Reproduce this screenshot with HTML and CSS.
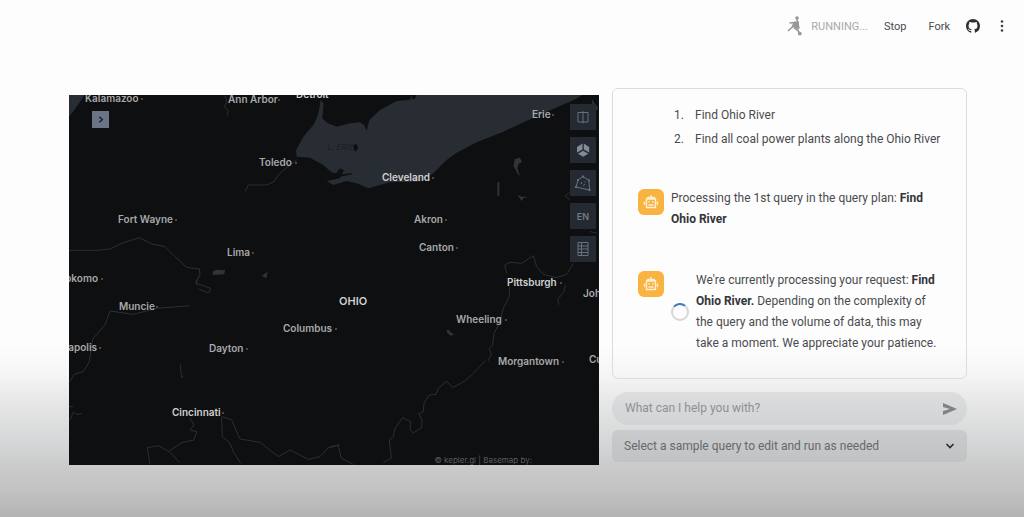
FILE: index.html
```html
<!DOCTYPE html>
<html lang="en">
<head>
<meta charset="utf-8">
<title>Map assistant</title>
<link rel="stylesheet" href="styles.css">
</head>
<body>
<header class="toolbar">
  <div class="status">
    <svg class="runner" viewBox="0 0 16 20" aria-hidden="true">
      <circle cx="10" cy="2" r="1.800"/>
      <path d="M7 5.500 L12 5.500 L12 13.500 L4.500 10.500 Z"/>
      <path class="limb" d="M10.500 6 L10 3 M9 6.500 L2.500 7 M11 8 L12 12.500 M6 10.500 L1 15 M7 11.500 L11 14.500 L13 18"/>
      <circle cx="12.800" cy="17.600" r="1.900"/>
    </svg>
    <span>RUNNING...</span>
  </div>
  <button class="text-button" type="button">Stop</button>
  <button class="text-button" type="button">Fork</button>
  <button class="icon-button" type="button" aria-label="GitHub">
    <svg class="github" viewBox="0 0 16 16" aria-hidden="true"><path d="M8 0C3.580 0 0 3.580 0 8c0 3.540 2.290 6.530 5.470 7.590.4.070.550-.170.550-.380 0-.190-.010-.820-.010-1.490-2.010.370-2.530-.490-2.690-.940-.090-.230-.480-.940-.820-1.130-.280-.150-.680-.520-.010-.530.630-.010 1.080.580 1.230.820.720 1.210 1.870.870 2.330.660.070-.520.280-.870.510-1.070-1.780-.2-3.640-.890-3.640-3.950 0-.870.310-1.590.820-2.150-.080-.2-.360-1.020.080-2.120 0 0 .670-.210 2.200.820.640-.180 1.320-.270 2-.270s1.360.090 2 .270c1.530-1.040 2.200-.820 2.200-.820.440 1.100.160 1.920.080 2.120.510.560.820 1.270.820 2.150 0 3.070-1.870 3.750-3.650 3.950.290.250.540.730.540 1.480 0 1.070-.010 1.930-.010 2.200 0 .210.150.460.550.380A8 8 0 0 0 16 8c0-4.420-3.580-8-8-8z"/></svg>
  </button>
  <button class="icon-button menu-button" type="button" aria-label="Menu">
    <svg class="dots" viewBox="0 0 4 12" aria-hidden="true"><circle cx="2" cy="1.500" r="1.300"/><circle cx="2" cy="6" r="1.300"/><circle cx="2" cy="10.500" r="1.300"/></svg>
  </button>
</header>

<main class="columns">
  <section class="map" aria-label="Map">
    <svg class="basemap" viewBox="0 0 530 370" preserveAspectRatio="xMidYMid slice">
      <!-- north east: Lake Erie and reservoirs -->
      <g transform="translate(221 -10) scale(.33333)">
        <path class="water" d="M92 45 L101 55 97 100 112 114 140 125 180 115 210 112 222 120 230 137 238 105 270 75 320 48 360 44 365 30 880 28 858 42 760 85 640 140 560 172 500 203 470 225 430 265 390 290 300 292 235 310 200 295 170 288 130 300 110 288 150 280 155 268 125 262 100 240 60 218 20 215 18 195 40 155 70 120 78 105 86 80Z"/>
        <path class="land" d="M190 180 l10 -2 5 10 -8 12 -6 -6Z M150 250 l12 6 -6 12 28 -4 2 4 -30 6 -26 2Z M365 30h15l-6 12h-8Z"/>
        <path class="lake" d="M675 222 l15 -4 6 14 -10 4 -4 14 8 22 -6 -4 -14 -26Z M622 292h6v40h-6Z M683 330 l12 5 20 0 -15 5 -5 8Z M905 42l18 26-2 10-14-18Z"/>
        <path class="border" d="M840 345 L826 332 838 322 M900 440 l20 4 M650 565 L644 540 660 532 695 535 730 512 740 545 760 568 800 578 830 568 850 535"/>
        <text class="lake-name" x="112" y="194">L. ERIE</text>
      </g>
      <!-- north west -->
      <g transform="translate(-9 -10) scale(.33333)">
        <path class="water" d="M27 28H75L45 72 27 95Z"/>
        <path class="lake" d="M458 560l10-6 28 2-4 12-34 2Z M605 572l18-12-4 20Z"/>
        <path class="border" d="M27 496 H110 L150 492 185 475 238 458 275 477 315 485 345 515 380 547 418 552 420 570 408 590 412 602 M495 32 l6 18-8 14 12 14-4 14 M710 225 L668 258 655 270 642 290 620 300 565 300 555 320"/>
      </g>
      <!-- south west -->
      <g transform="translate(-9 180) scale(.33333)">
        <path class="border" d="M408 24 L440 36 452 40 446 54 415 42 M408 24L418 2 M390 92 L290 100 220 118 150 108 135 150 98 192 88 260 70 290 42 298 30 320 M362 268v20l6 20-6-4 M27 395h12 M30 435l10-24 10 8 15-4 M390 430 L402 450 390 465 410 470 402 495 365 503 328 528 M270 568 L262 518 295 512 328 530 358 562 M485 425 L487 485 510 505 520 530 542 565 M487 425 L515 435 540 492 600 502 655 545 690 525 745 553 780 545 805 518 840 510"/>
      </g>
      <!-- south east: Ohio River valley -->
      <g transform="translate(261 180) scale(.33333)">
        <path class="lake" d="M350 164l8 2 6 8 10 4-12 4-10-8Z"/>
        <path class="border" d="M538 35V65L520 100 508 145 492 175 488 210 478 220 484 238 474 258 M465 258 L430 295 405 318 368 338 350 318 325 340 318 358 298 360 282 385 280 410 266 416 276 435 275 458 250 474 240 465 242 440 218 428 195 460 190 485 178 495 184 550 160 562 M0 516 L24 510 34 550 70 568 M706 30l-4 20-20 25 6 14"/>
      </g>
      <g class="places">
        <text x="16" y="7">Kalamazoo</text><circle cx="73" cy="4" r="1"/>
        <text x="159" y="8">Ann Arbor</text><circle cx="210" cy="5" r="1"/>
        <text class="major" x="227" y="3">Detroit</text>
        <text x="463" y="23">Erie</text><circle cx="484" cy="20" r="1"/>
        <text x="190" y="71">Toledo</text><circle cx="227" cy="68" r="1"/>
        <text class="major" x="313" y="86">Cleveland</text><circle cx="364" cy="83" r="1"/>
        <text x="345" y="128">Akron</text><circle cx="377" cy="125" r="1"/>
        <text x="350" y="156">Canton</text><circle cx="388" cy="153" r="1"/>
        <text x="49" y="128">Fort Wayne</text><circle cx="107" cy="125" r="1"/>
        <text x="158" y="161">Lima</text><circle cx="184" cy="158" r="1"/>
        <text class="end" x="29" y="187">okomo</text><circle cx="33" cy="184" r="1"/>
        <text class="major" x="438" y="191">Pittsburgh</text><circle cx="492" cy="188" r="1"/>
        <text x="514" y="202">Joh</text>
        <text class="state" x="270" y="210">OHIO</text>
        <text x="50" y="215">Muncie</text><circle cx="88" cy="212" r="1"/>
        <text x="387" y="228">Wheeling</text><circle cx="437" cy="225" r="1"/>
        <text x="214" y="237">Columbus</text><circle cx="267" cy="234" r="1"/>
        <text x="140" y="257">Dayton</text><circle cx="178" cy="254" r="1"/>
        <text class="end" x="28" y="256">apolis</text><circle cx="31" cy="253" r="1"/>
        <text x="429" y="270">Morgantown</text><circle cx="494" cy="267" r="1"/>
        <text x="520" y="268">Cu</text>
        <text class="major" x="103" y="321">Cincinnati</text><circle cx="154" cy="318" r="1"/>
      </g>
    </svg>
    <button class="panel-toggle" type="button" aria-label="Open side panel">
      <svg viewBox="0 0 8 8" aria-hidden="true"><path d="M3 1.500 L5.500 4 L3 6.500"/></svg>
    </button>
    <div class="controls">
      <button class="control" type="button" aria-label="Split map">
        <svg viewBox="0 0 16 16" aria-hidden="true"><path d="M3 3.500h10v9.500H3Z M8 2v12.500"/></svg>
      </button>
      <button class="control" type="button" aria-label="3D map">
        <svg class="solid" viewBox="0 0 16 16" aria-hidden="true"><path d="M7.500 1.500V7.500L2 10.500V5Z M8.800 1.500V7.500L14.200 10.500V5Z M8.100 8.800L13.300 11.800 8.100 14.800 3 11.800Z"/></svg>
      </button>
      <button class="control" type="button" aria-label="Draw on map">
        <svg viewBox="0 0 16 16" aria-hidden="true"><path d="M8 1.500 L14 5.500 14.500 15 1 12 3 5Z M6.500 7v2 M10 6.500v1 M8 10.500l2-1"/><path class="nodes" d="M7 .5h2v2H7Z M13 4.500h2v2h-2Z M13.500 14h2v2h-2Z M0 11h2v2H0Z M2 4h2v2H2Z"/></svg>
      </button>
      <button class="control" type="button" aria-label="Language">EN</button>
      <button class="control" type="button" aria-label="Legend">
        <svg viewBox="0 0 16 16" aria-hidden="true"><path d="M3 1.500h10v13H3Z M6.500 1.500v13 M3 5h10 M3 8h10 M3 11.500h10"/></svg>
      </button>
    </div>
    <p class="attribution">© kepler.gl | Basemap by:</p>
  </section>

  <section class="assistant" aria-label="Assistant">
    <div class="chat">
      <ol class="plan">
        <li>Find Ohio River</li>
        <li>Find all coal power plants along the Ohio River</li>
      </ol>
      <article class="message">
        <span class="avatar"><svg viewBox="0 0 16 16" aria-hidden="true"><path d="M8 1v3 M3.500 5h9v8.500h-9Z M1.500 7.500v3.500 M14.500 7.500v3.500 M3.500 5L5 3.500h6L12.500 5 M6 7v1.500 M10 7v1.500 M5.500 11h5"/></svg></span>
        <p>Processing the 1st query in the query plan: <b>Find Ohio River</b></p>
      </article>
      <article class="message">
        <span class="avatar"><svg viewBox="0 0 16 16" aria-hidden="true"><path d="M8 1v3 M3.500 5h9v8.500h-9Z M1.500 7.500v3.500 M14.500 7.500v3.500 M3.500 5L5 3.500h6L12.500 5 M6 7v1.500 M10 7v1.500 M5.500 11h5"/></svg></span>
        <div class="progress">
          <svg class="spinner" viewBox="0 0 18 18" aria-hidden="true"><circle cx="9" cy="9" r="8"/><path d="M3 3.700 A8 8 0 0 1 14 2.800"/></svg>
          <p>We're currently processing your request: <b>Find Ohio River.</b> Depending on the complexity of the query and the volume of data, this may take a moment. We appreciate your patience.</p>
        </div>
      </article>
    </div>
    <form class="prompt">
      <input class="prompt-input" type="text" placeholder="What can I help you with?" aria-label="Message">
      <button class="send" type="button" aria-label="Send"><svg viewBox="0 0 14 12" aria-hidden="true"><path d="M0 0 L14 6 L0 12 V8 L7 6 L0 4Z"/></svg></button>
    </form>
    <div class="sample">
      <select class="sample-select" aria-label="Sample query"><option>Select a sample query to edit and run as needed</option></select>
      <svg class="chevron" viewBox="0 0 10 6" aria-hidden="true"><path d="M1.500 1 L5 4.500 L8.500 1"/></svg>
    </div>
  </section>
</main>
</body>
</html>
```
FILE: styles.css
```css
* { box-sizing: border-box; }

body {
  margin: 0;
  min-height: 100vh;
  font: 12px/21px Roboto, "Noto Sans", sans-serif;
  color: #4a4b4e;
  background: linear-gradient(to top, #b3b3b4 0, #bbbbbb 14px, #c3c3c3 28px, #cacaca 50px, #d3d4d5 70px, #dcdddd 92px, #e9e9ea 120px, #f5f5f5 142px, #fdfdfd 172px);
}

button { padding: 0; border: 0; background: none; font: inherit; color: inherit; }
svg { display: block; }

.toolbar {
  display: flex;
  align-items: center;
  justify-content: flex-end;
  height: 52px;
  padding-right: 20px;
  font-size: 11px;
}
.status { display: flex; align-items: center; gap: 8px; color: #a9a9ab; }
.runner { width: 16px; height: 20px; fill: #98989a; }
.limb { fill: none; stroke: #98989a; stroke-width: 1.6; }
.text-button { margin-left: 16px; }
.text-button + .text-button { margin-left: 22px; }
.icon-button { margin-left: 16px; }
.github { width: 14px; height: 14px; fill: #303136; }
.dots { width: 4px; height: 12px; fill: #404146; }
.menu-button { margin-left: 20px; }

.columns {
  display: grid;
  grid-template-columns: 530fr 355fr;
  align-items: start;
  gap: 13px;
  padding: 36px 57px 52px 69px;
}

.map {
  position: relative;
  aspect-ratio: 53 / 37;
  margin-top: 7px;
  overflow: hidden;
  background: #0e0f10;
}
.basemap { width: 100%; height: 100%; }
.water { fill: #282d33; }
.land { fill: #0e0f10; }
.lake { fill: #303337; }
.border { fill: none; stroke: #2c2e31; stroke-width: 3; }
.lake-name { font: italic 24px Inter, sans-serif; fill: #1b1f24; }
.places { font: 600 10px Inter, sans-serif; fill: #a7a8aa; }
.places circle { fill: #5c5d60; }
.places .major { fill: #d0d1d3; }
.places .state { font-size: 11px; fill: #cfd0d1; }
.places .end { text-anchor: end; }

.panel-toggle {
  position: absolute;
  left: 23px;
  top: 16px;
  width: 17px;
  height: 17px;
  background: #6a7485;
}
.panel-toggle svg { width: 9px; height: 9px; margin: auto; fill: none; stroke: #1b2436; stroke-width: 1.4; }

.controls { position: absolute; right: 3px; top: 9px; display: grid; gap: 7px; }
.control {
  display: grid;
  place-items: center;
  width: 26px;
  height: 26px;
  background: #242932;
  color: #737a86;
  font: 600 9px Inter, sans-serif;
}
.control svg { width: 16px; height: 16px; fill: none; stroke: #69707d; stroke-width: 1; }
.control .solid { fill: #838995; stroke: none; }
.control .nodes { fill: #69707d; stroke: none; }

.attribution {
  position: absolute;
  right: 67px;
  bottom: 0;
  margin: 0;
  font: 8px/10px Inter, sans-serif;
  color: #5c5d5f;
}

.chat {
  border: 1px solid #dcdcde;
  border-radius: 6px;
  padding: 14px 16px 24px 25px;
}
.plan { margin: 0 0 37px; padding-left: 49px; line-height: 24px; }
.plan li { padding-left: 8px; }
.message { display: flex; gap: 7px; margin-bottom: 40px; }
.message:last-child { margin-bottom: 0; }
.message p { margin: 0; padding-right: 10px; }
.message b { color: #343539; font-weight: 700; }
.avatar {
  flex: none;
  display: grid;
  place-items: center;
  width: 26px;
  height: 26px;
  margin-top: 1px;
  border-radius: 6px;
  background: #f8b341;
}
.avatar svg { width: 16px; height: 16px; fill: none; stroke: #fff0d0; stroke-width: 1.4; }
.progress { display: flex; align-items: center; gap: 7px; }
.spinner { flex: none; width: 18px; height: 18px; fill: none; stroke: #d5d6d8; stroke-width: 2; }
.spinner path { stroke: #3f7cc0; }

.prompt {
  display: flex;
  align-items: center;
  height: 33px;
  margin-top: 13px;
  padding: 0 10px 0 13px;
  border-radius: 17px;
  background: linear-gradient(#dcddde, #d1d3d4);
}
.prompt-input { flex: 1; min-width: 0; padding: 0; border: 0; background: none; font: inherit; color: #505154; }
.prompt-input::placeholder { color: #8f9093; opacity: 1; }
.send svg { width: 14px; height: 12px; fill: #808184; }

.sample { position: relative; margin-top: 5px; }
.sample-select {
  display: block;
  width: 100%;
  height: 32px;
  padding: 0 30px 0 12px;
  border: 0;
  border-radius: 6px;
  appearance: none;
  background: linear-gradient(#cacbcc, #c1c2c3);
  font: inherit;
  color: #67686b;
}
.chevron { position: absolute; right: 12px; top: 13px; width: 10px; height: 6px; fill: none; stroke: #2a2b2e; stroke-width: 1.6; }
```
